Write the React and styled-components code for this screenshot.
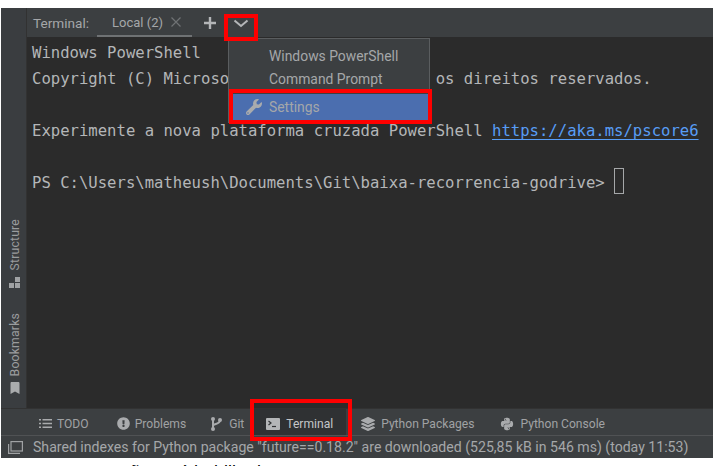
import React from "react";
import styled, { createGlobalStyle } from "styled-components";
import { FaWrench, FaExclamationCircle, FaLayerGroup, FaPython, FaBookmark } from "react-icons/fa";

const Global = createGlobalStyle`
  html, body { margin: 0; padding: 0; background: #fff; overflow: hidden; height: 466px; }
`;
const Page = styled.div`
  width: 726px; height: 466px; overflow: hidden; box-sizing: border-box;
  padding: 8px 13px 0 1px; font-family: Roboto, sans-serif;
`;
const Ide = styled.div`
  width: 712px; height: 450px; display: flex; flex-direction: column; background: #3c3f41; color: #afb1b3;
`;
const Main = styled.div`
  flex: 1; min-height: 0; display: flex;
`;
const SideStrip = styled.aside`
  flex: none; display: flex; flex-direction: column; justify-content: flex-end;
  align-items: center; padding-bottom: 14px; padding-left: 2px; box-sizing: border-box; width: 26px;
  background: #3a3d40; border-right: 1px solid #323232;
`;
const SideItem = styled.div`
  display: flex; flex-direction: column; align-items: center; gap: 6px; margin-top: ${p => p.$gap || 0}px;
  color: #9a9c9e;
`;
const SideLabel = styled.span`
  writing-mode: vertical-rl; transform: rotate(180deg); font-size: 12.2px; line-height: 14px; letter-spacing: .2px;
`;
const Content = styled.section`
  flex: 1; min-width: 0; display: flex; flex-direction: column; position: relative;
`;
const Header = styled.header`
  height: 29px; flex: none; display: flex; align-items: stretch; background: #3c3f41; padding-left: 7px; font-size: 13px;
`;
const HeaderLabel = styled.span`
  line-height: 30px; width: 64px; margin-left: -1px; font-size: 13.6px; color: #a5a7a9;
`;
const Tab = styled.div`
  width: 95px; box-sizing: border-box; display: flex; align-items: center; padding: 1px 0 0 15px; gap: 8px;
  border-bottom: 2px solid #6f7274; color: #a5a7a9;
`;
const IconButton = styled.div`
  width: 30px; display: flex; align-items: center; justify-content: center; position: relative;
  margin-left: ${p => p.$ml || 0}px; padding-top: ${p => p.$pt || 0}px; box-sizing: border-box;
`;
const RedFrame = styled.span`
  position: absolute; border: 4px solid #f00; box-sizing: border-box; pointer-events: none; z-index: 5;
  left: ${p => p.$l}px; top: ${p => p.$t}px; width: ${p => p.$w}px; height: ${p => p.$h}px;
`;
const Term = styled.main`
  flex: 1; background: #2b2b2b; padding: 3px 0 0 5px; font-family: "DejaVu Sans Mono", monospace;
  font-size: 15.6px; line-height: 26px; color: #b4b6b8; white-space: pre; overflow: hidden;
`;
const Line = styled.div`
  height: 26px;
`;
const Link = styled.span`
  color: #589df6; text-decoration: underline; text-underline-offset: 3px;
`;
const Caret = styled.span`
  display: inline-block; width: 8px; height: 24px; border: 1px solid #a5a7a9; vertical-align: -8px; margin-left: 9px;
  transform: translateY(-2px);
`;
const Menu = styled.nav`
  position: absolute; left: 201px; top: 30px; width: 202px; height: 85px; box-sizing: border-box;
  background: #3c3f41; border: 1px solid #5a5d5f; padding-top: 5px; font-size: 13.9px; color: #a5a7a9; z-index: 3;
`;
const MenuItem = styled.div`
  height: ${p => p.$h || 23}px; display: flex; align-items: center; padding-left: 40px; position: relative;
  background: ${p => (p.$active ? "#4b6eaf" : "transparent")}; margin-top: ${p => p.$mt || 0}px;
`;
const MenuIcon = styled.span`
  position: absolute; left: 17px; top: 5px; display: flex; color: #a9abad;
`;
const ToolBar = styled.div`
  height: 26px; flex: none; display: flex; align-items: stretch; border-top: 1px solid #323232; background: #3c3f41;
  padding-left: 38px; font-size: 12.1px; color: #a0a2a4; box-sizing: content-box;
`;
const ToolItem = styled.div`
  display: flex; align-items: center; gap: ${p => p.$g || 5}px; position: relative;
  margin-left: ${p => p.$ml || 0}px; padding: ${p => (p.$active ? "3px 13px 0" : "3px 0 0")};
  background: ${p => (p.$active ? "#2f3133" : "transparent")}; color: ${p => (p.$active ? "#c4c6c8" : "inherit")};
`;
const Status = styled.footer`
  height: 23px; flex: none; display: flex; align-items: center; gap: 10px; padding-left: 7px;
  border-top: 1px solid #505254; box-sizing: border-box; font-size: 14.1px; color: #a5a7a9; white-space: nowrap;
`;
const Clipped = styled.p`
  margin: 0; padding: 4px 0 0 119px; font-family: "Liberation Sans", sans-serif; font-size: 18px; line-height: 20px; color: #000; white-space: nowrap;
`;

const Plus = () => (
  <svg width="12" height="12" viewBox="0 0 12 12"><path d="M6 0v12M0 6h12" stroke="#b4b6b8" strokeWidth="2.4" /></svg>
);
const Cross = () => (
  <svg width="10" height="10" viewBox="0 0 10 10"><path d="M.5.5l9 9M9.5.5l-9 9" stroke="#6f7274" strokeWidth="1.2" /></svg>
);
const Chevron = () => (
  <svg width="16" height="9" viewBox="0 0 16 9"><path d="M1.5 1.5L8 7l6.5-5.5" fill="none" stroke="#b4b6b8" strokeWidth="2" /></svg>
);
const StructureIcon = () => (
  <svg width="11" height="11" viewBox="0 0 11 11"><path d="M6 0h5v5H6zM0 6h5v5H0zM6 6h5v5H6z" fill="#a0a2a4" /></svg>
);
const ListIcon = () => (
  <svg width="13" height="11" viewBox="0 0 13 11"><path d="M0 1h2v1.6H0zM3.5 1H13v1.6H3.5zM0 4.7h2v1.6H0zM3.5 4.7H13v1.6H3.5zM0 8.4h2V10H0zM3.5 8.4H13V10H3.5z" fill="#a9abad" /></svg>
);
const GitIcon = () => (
  <svg width="11" height="14" viewBox="0 0 11 14">
    <path d="M2 2v10M2 9c0-3 7-1 7-6" fill="none" stroke="#a9abad" strokeWidth="2" />
    <circle cx="2" cy="2" r="2" fill="#a9abad" /><circle cx="2" cy="12" r="2" fill="#a9abad" /><circle cx="9" cy="3" r="2" fill="#a9abad" />
  </svg>
);
const TerminalIcon = () => (
  <svg width="14" height="12" viewBox="0 0 14 12">
    <rect width="14" height="12" rx="1" fill="#b4b6b8" />
    <path d="M2.5 3l2.5 2-2.5 2" fill="none" stroke="#2f3133" strokeWidth="1.2" /><path d="M6 8.5h4" stroke="#2f3133" strokeWidth="1.2" />
  </svg>
);
const WindowIcon = () => (
  <svg width="15" height="13" viewBox="0 0 15 13" fill="none" stroke="#a0a2a4" strokeWidth="1.2">
    <rect x="3" y=".6" width="11.4" height="9.4" /><path d="M.6 3v9.4H12" />
  </svg>
);

export default function App() {
  return (
    <Page>
      <Global />
      <Ide>
        <Main>
          <SideStrip>
            <SideItem>
              <SideLabel>Structure</SideLabel>
              <StructureIcon />
            </SideItem>
            <SideItem $gap={25}>
              <SideLabel>Bookmarks</SideLabel>
              <FaBookmark size={12} color="#a9abad" />
            </SideItem>
          </SideStrip>
          <Content>
            <Header>
              <HeaderLabel>Terminal:</HeaderLabel>
              <Tab>Local (2) <Cross /></Tab>
              <IconButton $ml={3}><Plus /></IconButton>
              <IconButton $ml={1} $pt={1}>
                <Chevron />
                <RedFrame $l={-2} $t={6} $w={34} $h={27} />
              </IconButton>
            </Header>
            <Term>
              <Line>Windows PowerShell</Line>
              <Line>Copyright (C) Microsoft Corporation. Todos os direitos reservados.</Line>
              <Line />
              <Line>Experimente a nova plataforma cruzada PowerShell <Link>https://aka.ms/pscore6</Link></Line>
              <Line />
              <Line>PS C:\Users\matheush\Documents\Git\baixa-recorrencia-godrive&gt;<Caret /></Line>
            </Term>
            <Menu>
              <MenuItem>Windows PowerShell</MenuItem>
              <MenuItem>Command Prompt</MenuItem>
              <MenuItem $active $h={26} $mt={4}>
                <MenuIcon><FaWrench size={16} /></MenuIcon>
                Settings
                <RedFrame $l={0} $t={-5} $w={203} $h={35} />
              </MenuItem>
            </Menu>
          </Content>
        </Main>
        <ToolBar>
          <ToolItem><ListIcon />TODO</ToolItem>
          <ToolItem $ml={28} $g={5}><FaExclamationCircle size={13} color="#a9abad" />Problems</ToolItem>
          <ToolItem $ml={25} $g={7}><GitIcon />Git</ToolItem>
          <ToolItem $ml={9} $active $g={6}>
            <TerminalIcon />Terminal
            <RedFrame $l={-3} $t={-10} $w={102} $h={42} />
          </ToolItem>
          <ToolItem $ml={15} $g={6}><FaLayerGroup size={14} color="#a9abad" />Python Packages</ToolItem>
          <ToolItem $ml={26} $g={6}><FaPython size={14} color="#a9abad" />Python Console</ToolItem>
        </ToolBar>
        <Status>
          <WindowIcon />
          Shared indexes for Python package "future==0.18.2" are downloaded (525,85 kB in 546 ms) (today 11:53)
        </Status>
      </Ide>
      <Clipped>não está habilitado</Clipped>
    </Page>
  );
}
